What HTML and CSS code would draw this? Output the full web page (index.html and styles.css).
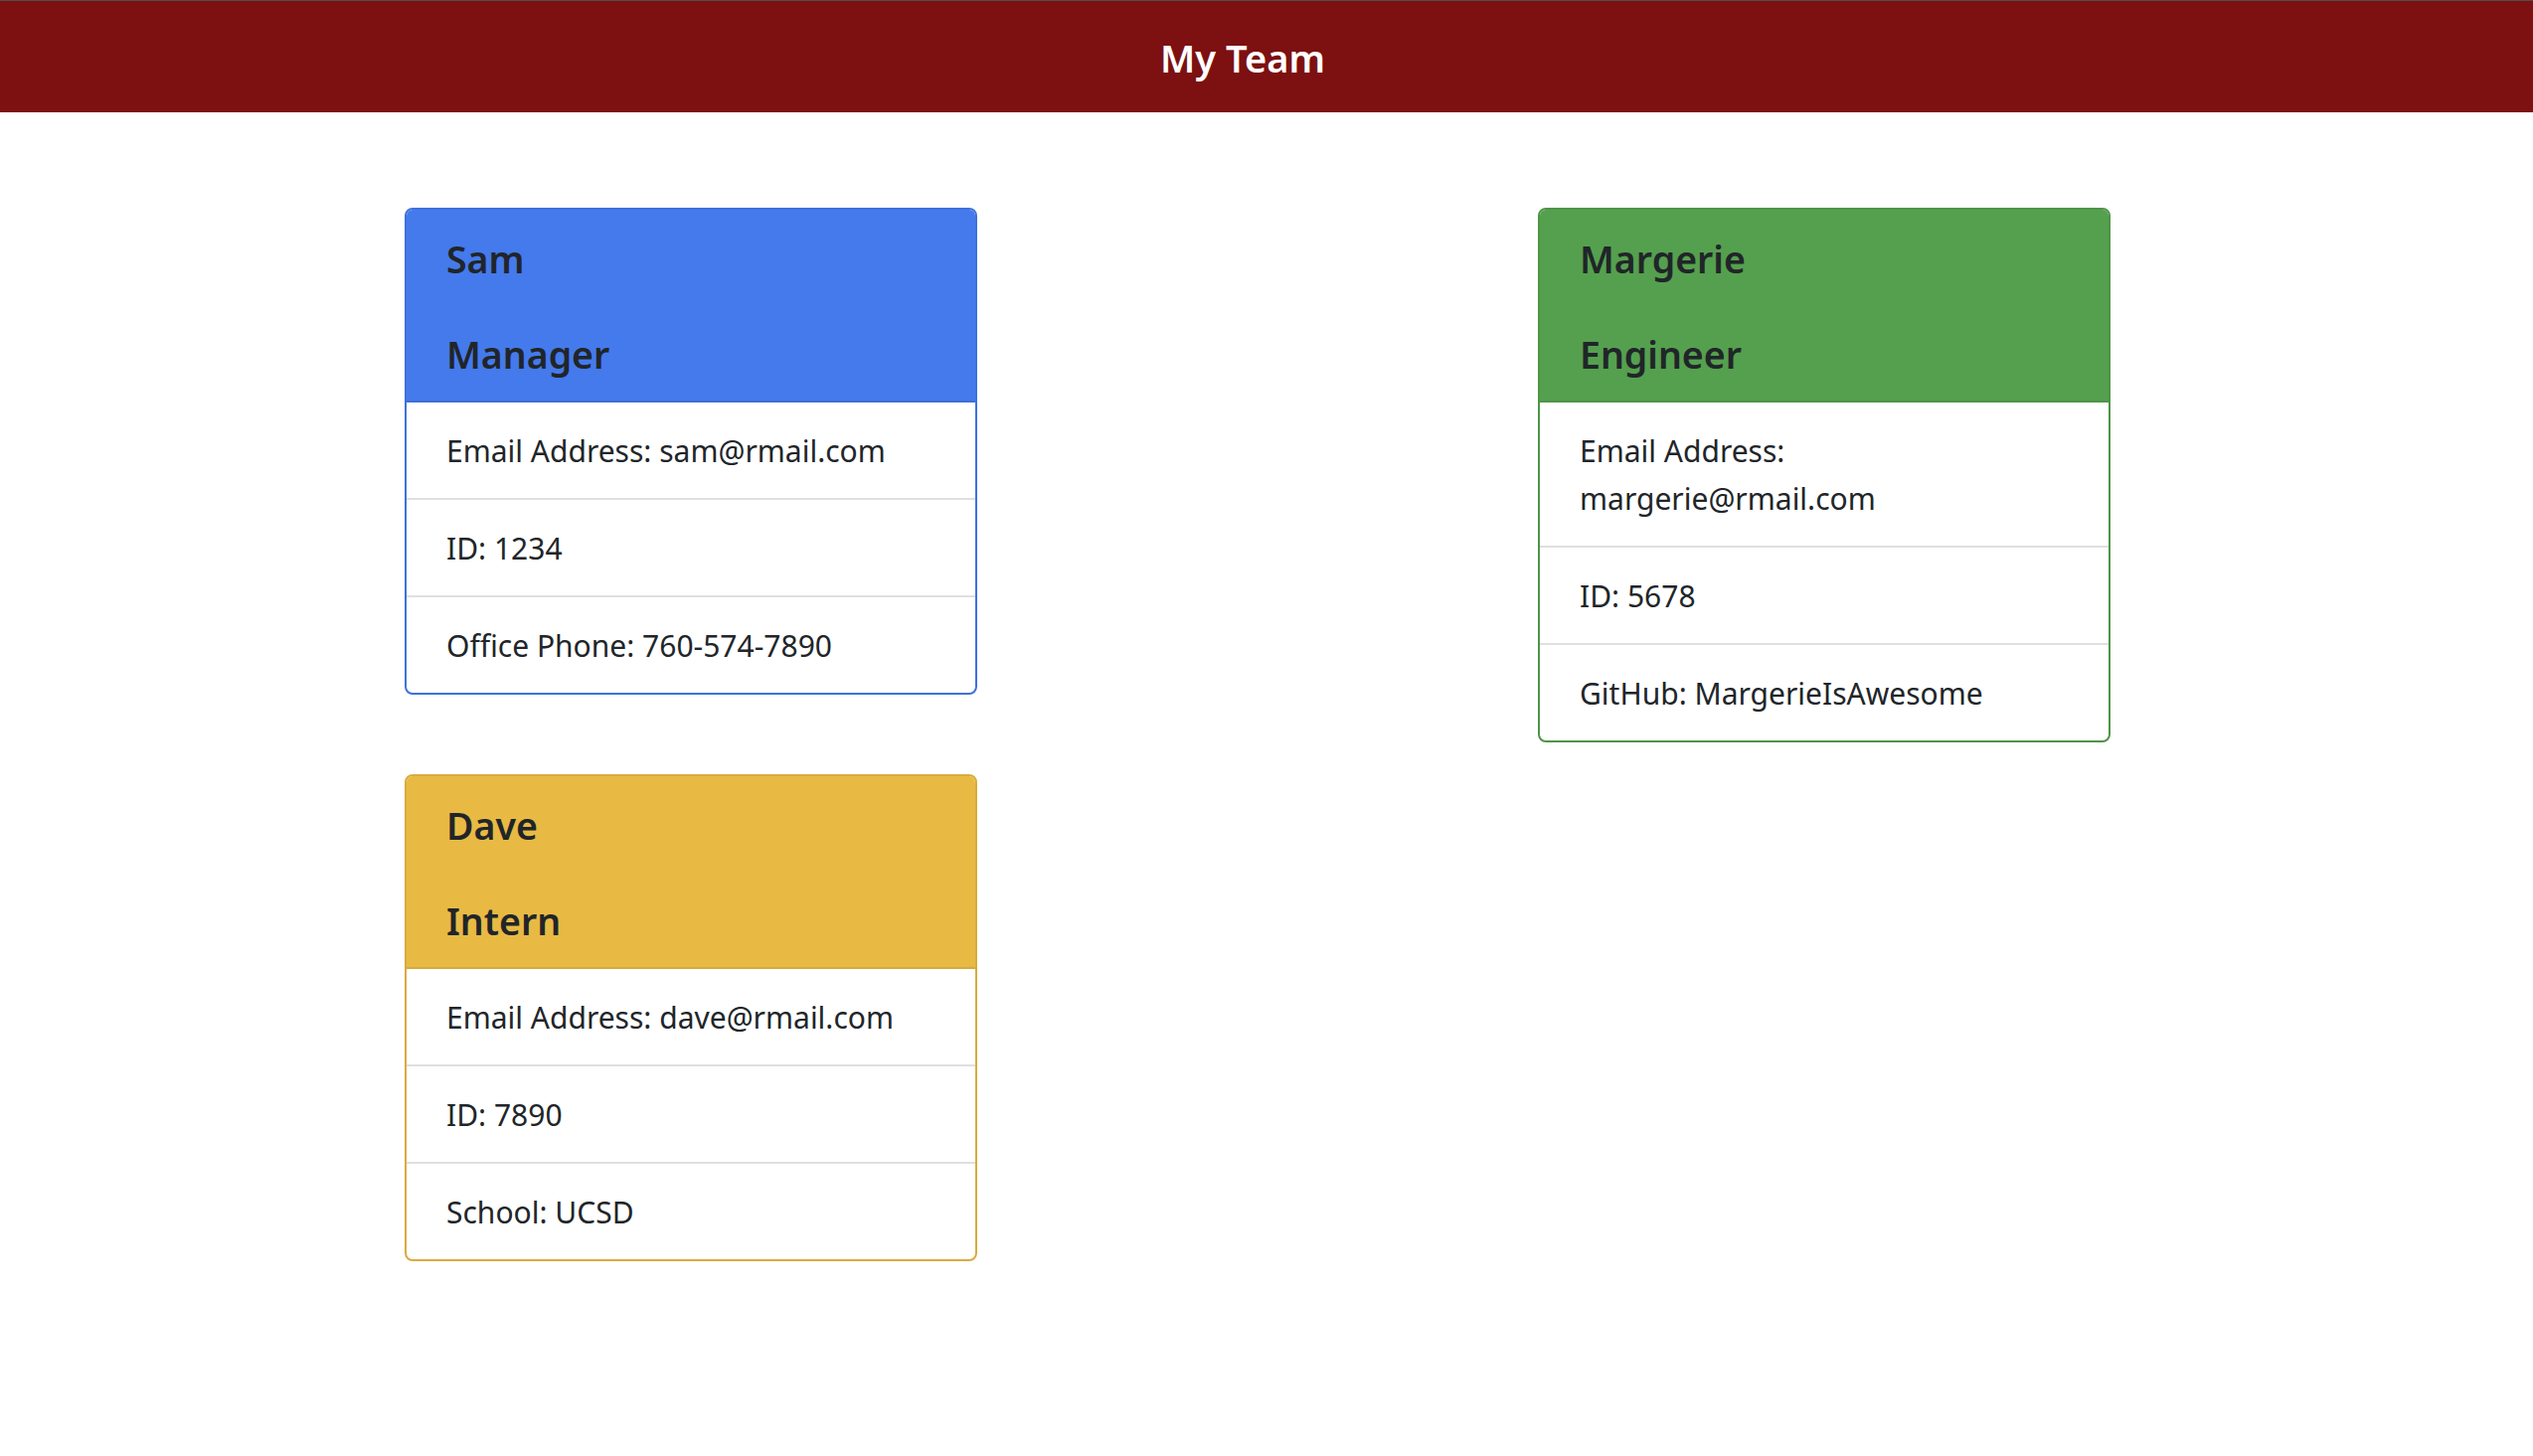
FILE: index.html
```html
<!DOCTYPE html>
<html lang="en">
<head>
<meta charset="utf-8">
<title>My Team</title>
<link rel="stylesheet" href="styles.css">
</head>
<body>
<header class="topbar">
  <h1 class="brand">My Team</h1>
</header>
<main class="team">
  <section class="card card-blue">
    <div class="card-head">
      <h2 class="head-line">Sam</h2>
      <h2 class="head-line">Manager</h2>
    </div>
    <ul class="items">
      <li class="item">Email Address: sam@rmail.com</li>
      <li class="item">ID: 1234</li>
      <li class="item">Office Phone: 760-574-7890</li>
    </ul>
  </section>
  <section class="card card-green">
    <div class="card-head">
      <h2 class="head-line">Margerie</h2>
      <h2 class="head-line">Engineer</h2>
    </div>
    <ul class="items">
      <li class="item">Email Address: margerie@rmail.com</li>
      <li class="item">ID: 5678</li>
      <li class="item">GitHub: MargerieIsAwesome</li>
    </ul>
  </section>
  <section class="card card-yellow">
    <div class="card-head">
      <h2 class="head-line">Dave</h2>
      <h2 class="head-line">Intern</h2>
    </div>
    <ul class="items">
      <li class="item">Email Address: dave@rmail.com</li>
      <li class="item">ID: 7890</li>
      <li class="item">School: UCSD</li>
    </ul>
  </section>
</main>
</body>
</html>
```
FILE: styles.css
```css
* { box-sizing: border-box; }
html, body { margin: 0; padding: 0; background: #fff; }
body {
  font-family: "Segoe UI", "Noto Sans", "Open Sans", sans-serif;
  color: #212529;
}
.topbar {
  height: 113px;
  background: #7d1010;
  border-top: 1px solid #4e4e4e;
  display: flex;
  align-items: center;
  justify-content: center;
  padding-right: 48px;
}
.brand {
  margin: 0;
  color: #fff;
  font-size: 38px;
  font-weight: 600;
  line-height: 1;
  padding-top: 2px;
}
.team {
  display: grid;
  grid-template-columns: 576px 576px;
  column-gap: 564px;
  row-gap: 32px;
  align-items: start;
  padding: 96px 0 0 407px;
}
.card {
  border: 2px solid;
  border-radius: 8px;
  overflow: hidden;
  background: #fff;
}
.card-blue { border-color: #3f71dc; }
.card-blue .card-head { background: #447aec; border-bottom-color: #3f6fd8; }
.card-green { border-color: #4f9447; }
.card-green .card-head { background: #55a04e; border-bottom-color: #4e9448; }
.card-yellow { border-color: #d9ab3e; }
.card-yellow .card-head { background: #e8ba44; border-bottom-color: #d6aa3e; }
.card-head {
  padding: 24px 40px;
  border-bottom: 2px solid;
  display: flex;
  flex-direction: column;
  gap: 48px;
}
.head-line {
  margin: 0;
  font-size: 37.5px;
  font-weight: 600;
  line-height: 48px;
  padding-top: 2px;
  height: 48px;
}
.items {
  list-style: none;
  margin: 0;
  padding: 0;
}
.item {
  padding: 25px 40px 23px;
  font-size: 30px;
  line-height: 48px;
  border-top: 2px solid #dfdfdf;
}
.item:first-child { border-top: 0; }
```
